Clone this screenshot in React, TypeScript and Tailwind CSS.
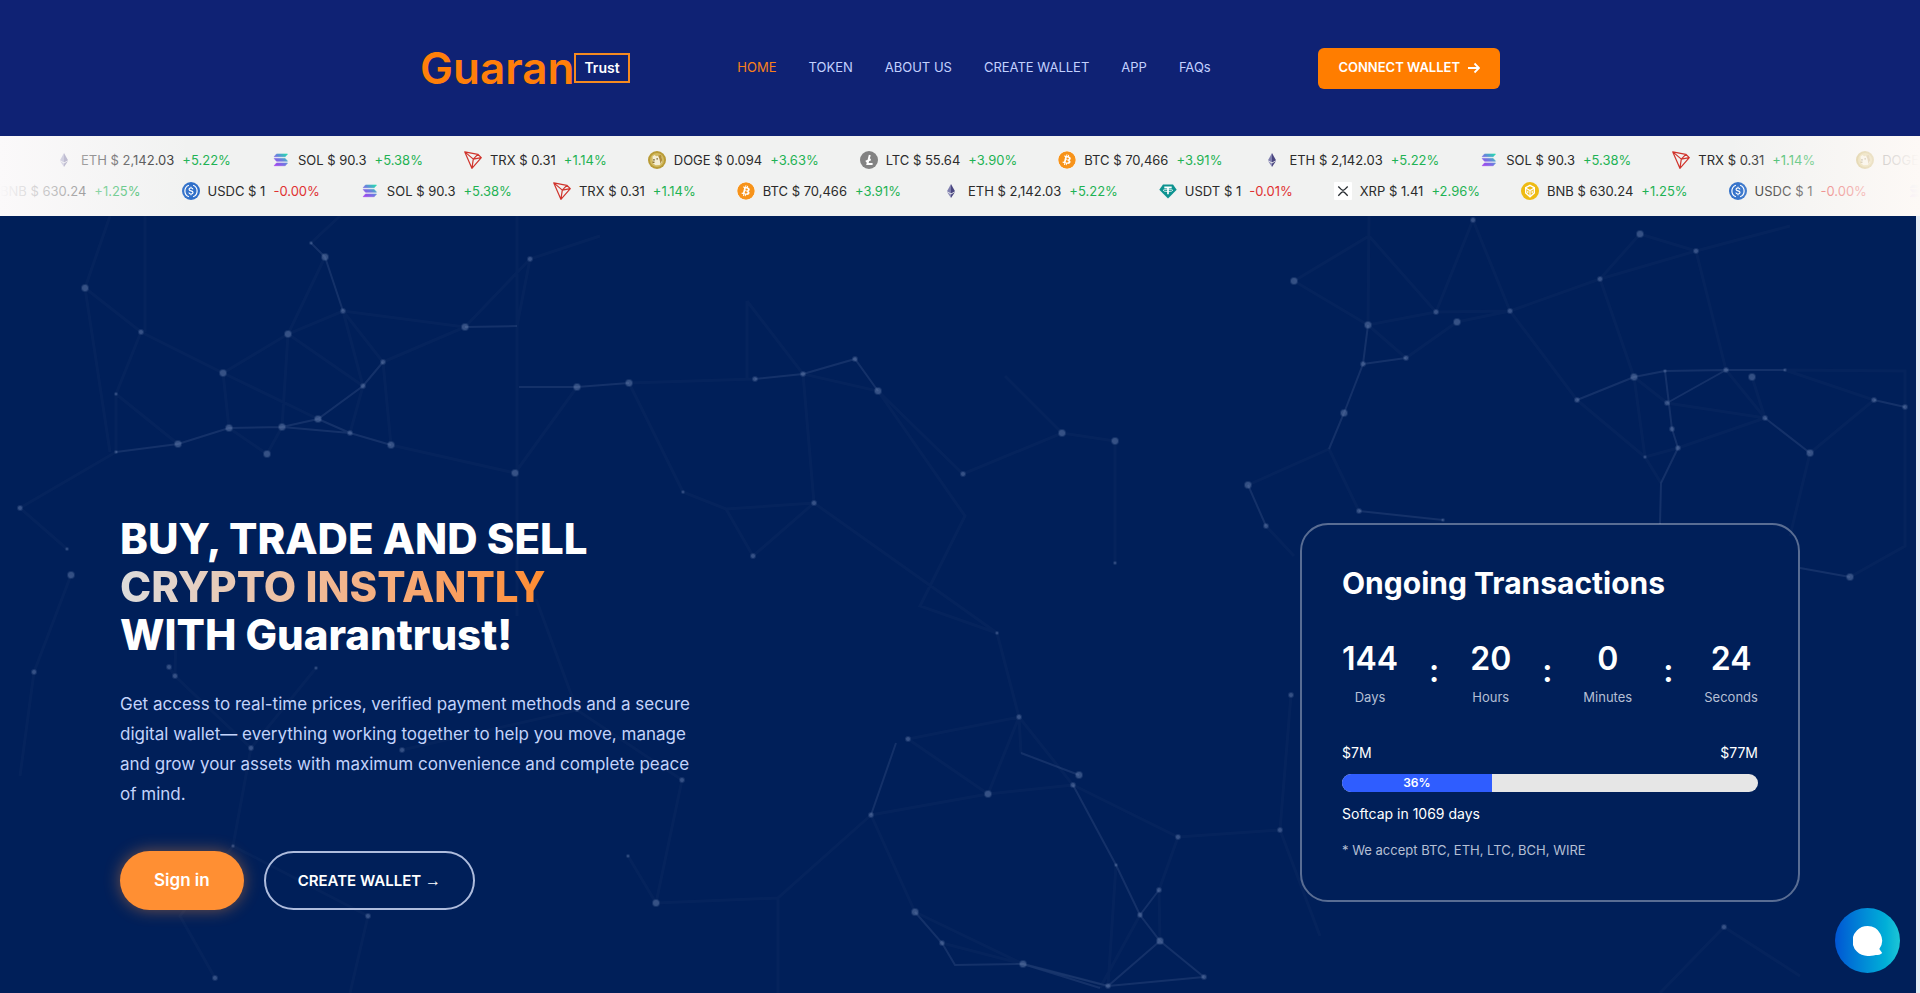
import React from 'react';
import { FaBitcoin } from 'react-icons/fa';

type Coin = 'BTC' | 'ETH' | 'SOL' | 'TRX' | 'DOGE' | 'LTC' | 'USDC' | 'USDT' | 'XRP' | 'BNB';

const quotes: Record<Coin, { price: string; change: string }> = {
  BTC: { price: '70,466', change: '+3.91%' },
  ETH: { price: '2,142.03', change: '+5.22%' },
  SOL: { price: '90.3', change: '+5.38%' },
  TRX: { price: '0.31', change: '+1.14%' },
  DOGE: { price: '0.094', change: '+3.63%' },
  LTC: { price: '55.64', change: '+3.90%' },
  USDC: { price: '1', change: '-0.00%' },
  USDT: { price: '1', change: '-0.01%' },
  XRP: { price: '1.41', change: '+2.96%' },
  BNB: { price: '630.24', change: '+1.25%' },
};

const topRow: Coin[] = ['ETH', 'SOL', 'TRX', 'DOGE', 'LTC', 'BTC', 'ETH', 'SOL', 'TRX', 'DOGE'];
const bottomRow: Coin[] = ['BNB', 'USDC', 'SOL', 'TRX', 'BTC', 'ETH', 'USDT', 'XRP', 'BNB', 'USDC', 'SOL'];

const navLinks = ['HOME', 'TOKEN', 'ABOUT US', 'CREATE WALLET', 'APP', 'FAQs'];

const countdown = [
  { value: '144', label: 'Days' },
  { value: '20', label: 'Hours' },
  { value: '0', label: 'Minutes' },
  { value: '24', label: 'Seconds' },
];

function CoinIcon({ coin }: { coin: Coin }) {
  if (coin === 'BTC') {
    return <FaBitcoin className="size-[18px] shrink-0 rounded-full bg-white text-[#f7931a]" />;
  }
  return (
    <svg viewBox="0 0 18 18" className="size-[18px] shrink-0" aria-hidden="true">
      {coin === 'ETH' && (
        <>
          <path d="M9 2 5 9.2l4 2.3z" fill="#7f7fae" />
          <path d="m9 2 4 7.2-4 2.3z" fill="#4a4680" />
          <path d="m5 10 4 6v-3.600z" fill="#8c8cb8" />
          <path d="m13 10-4 6v-3.600z" fill="#4a4680" />
        </>
      )}
      {coin === 'SOL' && (
        <>
          <linearGradient id="sol" x1="0" y1="1" x2="1" y2="0">
            <stop offset="0" stopColor="#a63cf0" />
            <stop offset="0.5" stopColor="#6f7be0" />
            <stop offset="1" stopColor="#1ee3ac" />
          </linearGradient>
          <path
            d="M4.500 3h11l-2.300 2.700H2.200zM2.200 7.500h11l2.300 2.700h-11zM4.500 12h11l-2.300 2.700H2.200z"
            fill="url(#sol)"
            stroke="url(#sol)"
            strokeWidth=".6"
            strokeLinejoin="round"
          />
        </>
      )}
      {coin === 'TRX' && (
        <path
          d="M.8.9 13.800 3.300l3.500 3.300-9.400 10.700zM.8.9l8.500 7.200 4.500-4.800M9.300 8.100 7.900 17.300M9.300 8.100l8-1.500"
          fill="none"
          stroke="#d0342c"
          strokeWidth="1.200"
          strokeLinejoin="round"
        />
      )}
      {coin === 'DOGE' && (
        <>
          <circle cx="9" cy="9" r="9" fill="#b99b36" />
          <circle cx="9" cy="9" r="7" fill="#d3bb62" />
          <path d="M4.500 5.500 6.500 4l1.700 1.200L11 4.500l2.500 1.500.5 5-2.300 3-4.200.2-2.500-2z" fill="#f5eed6" />
          <path d="M10 4.500 13 4l1.200 5-1.700 4-1-5z" fill="#b08d3c" />
          <path d="M5.200 8.300h1.500v1.300H5.200zM8.500 7.300h1.300v1.300H8.500z" fill="#5d4a1c" />
          <path d="M4.500 10.500h2v1.500h-2z" fill="#8f7430" />
        </>
      )}
      {coin === 'LTC' && (
        <>
          <circle cx="9" cy="9" r="9" fill="#838383" />
          <path d="M9.800 4 7.400 13h5.200M5.800 10.600l5-2.200" fill="none" stroke="#fff" strokeWidth="1.900" />
        </>
      )}
      {coin === 'USDC' && (
        <>
          <circle cx="9" cy="9" r="9" fill="#2f6fc9" />
          <path
            d="M6.900 3.200a6.200 6.200 0 0 0 0 11.600M11.100 3.200a6.200 6.200 0 0 1 0 11.600"
            fill="none"
            stroke="#fff"
            strokeWidth="1.200"
          />
          <path
            d="M11 7.300C10.800 6.400 10 6 9 6s-1.900.5-1.900 1.400C7.100 9.400 11 8.500 11 10.500c0 1-.9 1.500-2 1.500s-2-.5-2.100-1.500M9 4.800V6m0 6v1.200"
            fill="none"
            stroke="#fff"
            strokeWidth="1.200"
          />
        </>
      )}
      {coin === 'USDT' && (
        <>
          <path d="M4 2.500h10l3.700 5.300L9 16.500.3 7.800z" fill="#0d9390" />
          <path d="M5.300 5.300h7.400M9 5.300v7" fill="none" stroke="#fff" strokeWidth="1.700" />
          <ellipse cx="9" cy="8.300" rx="4.800" ry="1.200" fill="none" stroke="#fff" strokeWidth=".8" />
        </>
      )}
      {coin === 'XRP' && (
        <>
          <rect width="18" height="18" rx="1" fill="#fff" />
          <path
            d="M4.300 4.500l2.900 2.900c1 1 2.600 1 3.600 0l2.900-2.900M4.300 13.700l2.900-2.900c1-1 2.600-1 3.600 0l2.900 2.900"
            fill="none"
            stroke="#24292e"
            strokeWidth="1.300"
          />
        </>
      )}
      {coin === 'BNB' && (
        <>
          <circle cx="9" cy="9" r="9" fill="#eebb13" />
          <path
            d="M9 3.300 13.300 5.700v5.200L9 14.700l-4.300-3.800V5.700z"
            fill="none"
            stroke="#fff"
            strokeWidth="1.400"
          />
          <path d="M5 6.200 9 8.500l4-2.300M9 8.500v5.500M6.800 8.800v2.400M11.200 8.800v2.400" fill="none" stroke="#fff" strokeWidth="1.200" />
        </>
      )}
    </svg>
  );
}

function TickerRow({ coins, className }: { coins: Coin[]; className: string }) {
  return (
    <ul className={`flex gap-[41px] leading-[18px] ${className}`}>
      {coins.map((coin, i) => {
        const { price, change } = quotes[coin];
        return (
          <li key={i} className="flex shrink-0 items-center gap-2 whitespace-nowrap">
            <CoinIcon coin={coin} />
            <span className="text-[#2b2b2b]">{coin} $ {price}</span>
            <span className={change.startsWith('-') ? 'text-[#e03131]' : 'text-[#1fb254]'}>{change}</span>
          </li>
        );
      })}
    </ul>
  );
}

// [x, y, radius] of every glowing dot
const nodes: [number, number, number][] = [
  [85, 72, 3], [141, 116, 2], [325, 41, 3], [311, 27, 1], [343, 95, 2], [288, 118, 3], [223, 157, 3],
  [116, 178, 1], [383, 146, 2], [363, 170, 2], [318, 203, 3], [229, 212, 3], [282, 211, 3], [178, 228, 3],
  [267, 238, 3], [350, 217, 2], [391, 229, 3], [116, 236, 1], [465, 111, 3], [530, 43, 2], [577, 171, 3],
  [629, 167, 3], [515, 257, 3], [755, 163, 2], [803, 158, 2], [855, 143, 2], [878, 175, 3], [683, 276, 1],
  [814, 287, 2], [753, 340, 2], [20, 292, 2], [71, 359, 3], [67, 333, 1],
  [1473, 4, 2], [1640, 18, 3], [1696, 35, 2], [1294, 65, 3], [1600, 63, 2], [1436, 96, 2], [1457, 106, 3],
  [1510, 95, 2], [1368, 109, 3], [1406, 142, 2], [1363, 148, 2], [1344, 197, 3], [1248, 269, 3],
  [1266, 310, 2], [1359, 295, 2], [1443, 304, 1], [1062, 217, 3], [1115, 225, 3], [1115, 347, 1],
  [963, 258, 2], [1577, 184, 2], [1634, 161, 3], [1665, 155, 1], [1667, 187, 2], [1672, 213, 2],
  [1678, 232, 2], [1645, 241, 1], [1726, 154, 2], [1752, 161, 3], [1785, 154, 1], [1765, 202, 2],
  [1810, 237, 3], [1874, 184, 2], [1905, 191, 2], [1850, 361, 3],
  [997, 417, 1], [1019, 501, 2], [908, 523, 2], [988, 578, 3], [1079, 559, 3], [1073, 569, 2], [871, 599, 2],
  [915, 696, 3], [942, 727, 2], [1023, 748, 3], [1108, 770, 2], [1204, 761, 2], [1160, 725, 3],
  [1140, 699, 2], [1159, 674, 2], [1116, 649, 1], [1178, 621, 2], [1280, 614, 2], [1291, 479, 2],
  [682, 564, 2], [169, 451, 2], [175, 460, 2], [316, 452, 1], [251, 532, 2], [402, 534, 2], [577, 494, 1],
  [233, 630, 1], [368, 700, 2], [628, 640, 1], [656, 687, 3], [34, 456, 2], [215, 762, 2], [1724, 711, 2],
];

const brightLines =
  'M311 27 325 41 343 95M178 228 229 212 282 211 318 203 363 170 383 146M282 211 350 217 318 203M350 217 391 229M116 236 178 228M465 111 517 110M519 171 577 171 629 167M755 163 803 158 855 143 878 175M1368 109 1363 148 1344 197 1329 233M1363 148 1406 142M1577 184 1634 161 1665 155 1672 213 1678 232M1665 155 1726 154 1785 154M1667 187 1726 154M1765 202 1810 237M1874 184 1905 191M1678 232 1661 267 1660 308M1359 295 1443 304M915 696 942 727 955 749 1023 748 1108 770 1204 761M1023 748 1100 772M1116 649 1140 699 1160 725 1204 761M1140 699 1159 674M1073 569 1116 649M1021 537 1079 559M1248 269 1266 310M1850 361 1800 352M1108 770 1160 725M871 599 896 527';

const faintLines =
  'M85 72 141 116 223 157 288 118 343 95 465 111 383 146M141 116 116 178V236L20 292 67 333M116 178 178 228M325 41 288 118 363 170M343 95 383 146 391 229 515 257 577 171M223 157 229 212M223 157 318 203M288 118 282 211M343 95 363 170 350 217M229 212 267 238 282 211M145 0V116M110 0 85 72 110 236M340 0 311 27M517 110 530 43 600 20M517 0V257 400M530 43 465 111M629 167 683 276 726 293 753 340 814 287 726 293M629 167 755 163M747 85V163M747 85 803 158 878 175 963 258 1062 217 1115 225V347M814 287 803 158M1369 0 1368 109 1406 142M1294 65 1368 109 1436 96 1510 95 1457 106 1406 142M1294 65 1369 20 1436 96 1473 4 1510 95 1577 184M1510 95 1600 63 1640 18 1696 35 1726 154M1600 63 1634 161 1667 187 1765 202 1752 161M1600 63 1696 35 1790 10M1577 184 1645 241 1661 267M1645 241 1678 232 1765 202 1726 154M1634 161 1645 241M1785 154 1874 184 1810 237 1790 320M1785 154 1905 155 1905 191 1905 330 1850 361M1329 233 1248 269M1329 233 1359 295M1266 310 1294 340M1005 160 1062 217M878 175 965 300 920 390 997 417 1019 501 908 523 988 578 1019 501 1021 537M814 287 997 417M1019 501 1073 569 988 578 871 599 915 696 1023 748M871 599 778 682V777M778 682 656 687 628 640M1073 569 1178 621 1280 614 1320 720M1178 621 1159 674 1160 725M1116 649 1108 770M169 451 175 460 251 532 316 452M251 532 233 630 368 700M175 460 176 410M71 359 34 456 20 560M402 534 577 494 682 564 656 687M536 383 577 494M233 630 180 700 215 762M1291 479 1280 614M1100 772 1140 699M1660 777 1724 711 1800 760M368 700 350 777M942 727 1108 770';

function NetworkBackground() {
  return (
    <svg
      viewBox="0 0 1920 993"
      preserveAspectRatio="xMidYMin slice"
      className="absolute inset-0 size-full"
      aria-hidden="true"
    >
      <path d={faintLines} fill="none" stroke="#8fa5cf" strokeOpacity="0.035" strokeWidth="3" />
      <path d={brightLines} fill="none" stroke="#8fa5cf" strokeOpacity="0.14" strokeWidth="2" />
      {nodes.map(([x, y, r]) => (
        <g key={`${x}-${y}`} fill="#8fa5cf">
          <circle cx={x} cy={y} r={r + 1} fillOpacity="0.15" />
          <circle cx={x} cy={y} r={r} fillOpacity="0.25" />
        </g>
      ))}
    </svg>
  );
}

function Header() {
  return (
    <header className="shrink-0 bg-[#0f2274]">
      <div className="mx-auto flex h-[136px] max-w-[1080px] items-center justify-between">
        <a href="#" className="flex items-center">
          <span className="text-[44px] leading-none font-semibold text-[#ff7f0a]">Guaran</span>
          <span className="border-2 border-[#f58a20] px-2 py-[3px] text-sm leading-5 font-semibold text-white">
            Trust
          </span>
        </a>
        <nav className="flex gap-8 text-[13px]">
          {navLinks.map((label, i) => (
            <a key={label} href="#" className={i === 0 ? 'text-[#f9811a]' : 'text-[#c3d1ff]'}>
              {label}
            </a>
          ))}
        </nav>
        <button className="flex h-[41px] items-center gap-2 rounded-md bg-[#ff7d00] px-5 text-[13px] font-semibold text-white">
          CONNECT WALLET
          <svg viewBox="0 0 12 12" className="size-3" fill="none" stroke="currentColor" strokeWidth="1.800" aria-hidden="true">
            <path d="M0 6h11M6.500 1.500 11 6l-4.500 4.500" />
          </svg>
        </button>
      </div>
    </header>
  );
}

function Ticker() {
  return (
    <section className="relative flex h-20 shrink-0 flex-col gap-[13px] overflow-hidden bg-[#f1f2f1] pt-[15px] text-[13px]">
      <TickerRow coins={topRow} className="ml-[55px]" />
      <TickerRow coins={bottomRow} className="-ml-[26px]" />
      <div className="absolute inset-y-0 left-0 w-1/10 bg-linear-to-r from-[#fbf9fa] to-[#f1f2f1]/0" />
      <div className="absolute inset-y-0 right-0 w-1/10 bg-linear-to-l from-[#fdf9f6] to-[#f1f2f1]/0" />
    </section>
  );
}

function TransactionsCard() {
  return (
    <aside className="w-[500px] rounded-[28px] border-2 border-white/35 p-10 text-white">
      <h2 className="text-[30px] leading-[36px] font-bold">Ongoing Transactions</h2>
      <div className="mt-[34px] flex items-center justify-between">
        {countdown.map(({ value, label }, i) => (
          <React.Fragment key={label}>
            {i > 0 && <span className="text-[32px] leading-8 font-semibold">:</span>}
            <div className="flex flex-col items-center">
              <span className="text-[32px] leading-[48px] font-semibold">{value}</span>
              <span className="mt-1 text-[13px] leading-5 text-[#b5bfd4]">{label}</span>
            </div>
          </React.Fragment>
        ))}
      </div>
      <div className="mt-9 flex justify-between text-sm leading-5">
        <span>$7M</span>
        <span>$77M</span>
      </div>
      <div className="mt-[11px] h-[18px] overflow-hidden rounded-full bg-[#e6e6e6]">
        <div className="h-full w-[36%] bg-[#2f5dff] text-center text-xs leading-[18px] font-semibold">36%</div>
      </div>
      <p className="mt-3 text-sm leading-5">Softcap in 1069 days</p>
      <p className="mt-4 text-[13px] leading-5 text-[#b5bfd4]">* We accept BTC, ETH, LTC, BCH, WIRE</p>
    </aside>
  );
}

export default function App() {
  return (
    <div className="flex h-screen flex-col overflow-hidden bg-[#001f59] font-['Inter',sans-serif]">
      <Header />
      <Ticker />
      <main className="relative flex min-h-screen shrink-0 items-center justify-between px-[120px]">
        <NetworkBackground />
        <section className="relative">
          <h1 className="text-[42px] leading-[48px] font-extrabold text-white">
            BUY, TRADE AND SELL
            <br />
            <span className="bg-linear-to-r from-[#dcdcdc] to-[#ff8c2e] bg-clip-text text-transparent">
              CRYPTO INSTANTLY
            </span>
            <br />
            WITH Guarantrust!
          </h1>
          <p className="mt-[30px] text-[17px] leading-[30px] text-[#c3d3fb]">
            Get access to real-time prices, verified payment methods and a secure
            <br />
            digital wallet— everything working together to help you move, manage
            <br />
            and grow your assets with maximum convenience and complete peace
            <br />
            of mind.
          </p>
          <div className="mt-[42px] flex gap-5 font-semibold text-white">
            <button className="h-[59px] rounded-[30px] bg-[#ff8f33] px-[34px] text-[17px] shadow-[0_0_16px_rgba(255,143,51,0.45)]">
              Sign in
            </button>
            <button className="h-[59px] rounded-[30px] border-2 border-[#aebcdd] px-8 text-[15px]">
              CREATE WALLET <span className="font-['Liberation_Sans',sans-serif] text-base font-normal">→</span>
            </button>
          </div>
        </section>
        <div className="relative">
          <TransactionsCard />
        </div>
        <div className="absolute inset-y-0 right-0 w-1 bg-[#e4ebf3]" />
      </main>
      <button
        aria-label="Open chat"
        className="fixed right-5 bottom-5 flex size-[65px] items-center justify-center rounded-full bg-linear-to-r from-[#0355d3] to-[#1cc6d6]"
      >
        <svg viewBox="0 0 30 30" className="size-[30px]" fill="#fff" aria-hidden="true">
          <path d="M14.500 0a14.500 14.500 0 0 1 11.800 23l2.900 3.900c-1.500 1.700-4 2-6.500 2C20 29.700 17 30 14.500 30a15 15 0 0 1 0-30z" />
        </svg>
      </button>
    </div>
  );
}
